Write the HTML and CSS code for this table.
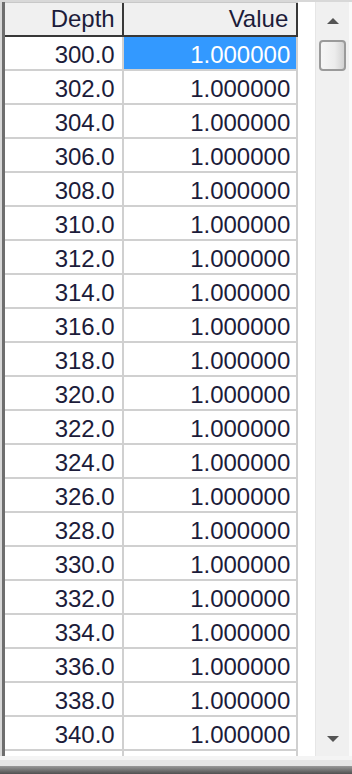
FILE: index.html
```html
<!DOCTYPE html>
<html>
<head>
<meta charset="utf-8">
<link rel="stylesheet" href="styles.css">
</head>
<body>
<div class="window">
  <div class="main">
    <div class="grid">
      <div class="hdr">
        <div class="hc c1">Depth</div>
        <div class="hc c2">Value</div>
      </div>
      <div class="rows" id="rows"></div>
    </div>
    <div class="gap"></div>
    <div class="sbar">
      <div class="arrow up"></div>
      <div class="thumb"></div>
      <div class="track"></div>
      <div class="arrow down"></div>
    </div>
    <div class="redge"></div>
  </div>
  <div class="bottom">
    <div class="bl1"></div>
    <div class="bl2"></div>
    <div class="bl3"></div>
  </div>
</div>
<script>
var r = document.getElementById('rows');
var h = '';
for (var i = 0; i <= 20; i++) {
  var d = (300 + 2 * i).toFixed(1);
  h += '<div class="row"><div class="cell c1">' + d + '</div><div class="cell c2' + (i === 0 ? ' sel' : '') + '">1.000000</div></div>';
}
h += '<div class="row"><div class="cell c1"></div><div class="cell c2"></div></div>';
r.innerHTML = h;
</script>
</body>
</html>
```
FILE: styles.css
```css
html, body { margin: 0; padding: 0; }
body {
  width: 352px; height: 774px; overflow: hidden;
  background: #f0f0f0;
  font-family: "Liberation Sans", Arial, sans-serif;
}
.window { display: flex; flex-direction: column; height: 774px; }
.main {
  display: flex; height: 756px;
  padding-top: 2px; padding-left: 2px;
  box-sizing: border-box;
  background: #d8d8d8;
}
.grid {
  width: 297px;
  border-left: 3px solid #6e6e6e;
  background: #fff;
  overflow: hidden;
  display: flex; flex-direction: column;
}
.hdr {
  display: flex; height: 32px; flex: none;
  background: #f0f0f0;
  border-bottom: 2px solid #383838;
  border-top: 1px solid #c8c8c8;
}
.hc {
  box-sizing: border-box;
  font-size: 24px; line-height: 32px;
  color: #1c1c3a;
  text-align: right;
  padding-right: 7px;
}
.hdr .c1 { width: 119px; border-right: 2px solid #383838; }
.hdr .c2 { width: 175px; border-right: 2px solid #383838; padding-right: 8px; }
.rows { flex: 1; overflow: hidden; }
.row {
  display: flex; height: 34px;
}
.cell {
  box-sizing: border-box;
  height: 34px;
  font-size: 24px; line-height: 36px;
  color: #1c1c3a;
  text-align: right;
  border-bottom: 2px solid #d0d0d0;
  padding-right: 7px;
}
.row .c1 { width: 119px; border-right: 2px solid #d0d0d0; }
.row .c2 { width: 175px; border-right: 2px solid #d0d0d0; padding-right: 6px; }
.cell.sel { background: #3399ff; color: #fff; }
.gap { width: 17px; background: #fff; }
.sbar {
  width: 33px;
  background: #f0f0f0;
  display: flex; flex-direction: column; align-items: center;
  border-left: 1px solid #e6e6e6;
}
.arrow { width: 33px; flex: none; display: flex; justify-content: center; }
.arrow.up { height: 38px; align-items: center; }
.arrow.down { height: 34px; align-items: center; }
.arrow.up::before {
  content: ""; width: 0; height: 0;
  border-left: 6px solid transparent; border-right: 6px solid transparent;
  border-bottom: 6px solid #555;
}
.arrow.down::before {
  content: ""; width: 0; height: 0;
  border-left: 6px solid transparent; border-right: 6px solid transparent;
  border-top: 6px solid #555;
}
.thumb {
  width: 27px; height: 31px; flex: none;
  box-sizing: border-box;
  border: 2px solid #9a9a9a; border-radius: 4px;
  background: linear-gradient(to right, #f6f6f6 0%, #ececec 60%, #d2d2d2 100%);
}
.track { flex: 1; }
.redge { width: 3px; background: #fafafa; }
.bottom { flex: 1; display: flex; flex-direction: column; }
.bl1 { height: 4px; background: #f4f4f4; }
.bl2 { height: 6px; background: #e6e6e6; }
.bl3 { flex: 1; background: linear-gradient(to bottom, #9a9a9a, #505050); }
```
